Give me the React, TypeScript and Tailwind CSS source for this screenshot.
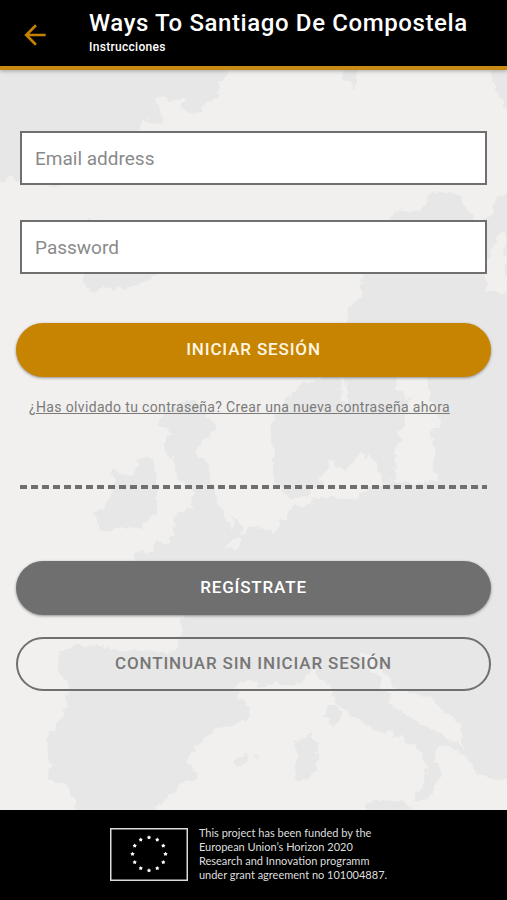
import React from "react";

const LAND = "#e7e7e7";
const SEA = "#f1f0ee";

function EuropeMap() {
  return (
    <svg
      className="absolute inset-0 -z-10 h-full w-full"
      viewBox="0 70 507 740"
      preserveAspectRatio="xMidYMid slice"
      aria-hidden="true"
    >
      <defs>
        <filter id="coast" x="0" y="0" width="100%" height="100%">
          <feTurbulence type="fractalNoise" baseFrequency="0.11" numOctaves="3" seed="4" result="n" />
          <feDisplacementMap in="SourceGraphic" in2="n" scale="11" xChannelSelector="R" yChannelSelector="G" />
        </filter>
      </defs>
      <rect x="0" y="70" width="507" height="740" fill={SEA} />
      <g filter="url(#coast)" fill={LAND}>
        <rect x="-20" y="50" width="547" height="780" fill={SEA} />
        {/* Greenland */}
        <path d="M-10 60H228V72L220 84 217 98 205 105 200 113 190 114 181 106 186 97 172 101 163 96 157 98 156 108 164 115 162 126 140 118 137 132 60 186 21 184 12 178 -10 184Z" />
        {/* Iceland */}
        <path d="M84 222 90 218 97 221 150 240 155 274 152 278 135 286 120 289 105 287 91 292 84 283 80 250Z" />
        {/* Svalbard and Novaya Zemlya */}
        <path d="M338 60H358V82L355 91 343 78Z" />
        <path d="M492 60V82L500 95 502 105 520 114V60Z" />
        {/* Scandinavia */}
        <path d="M388 220 400 209 408 213 420 210 428 198 434 193 440 189 450 194 462 200 467 212 480 221 492 215 497 197 520 190V520H430L435 492 397 480 382 484 375 460 360 452 347 470 330 462 324 480 310 494 290 500 272 478 275 452 270 440 270 425 278 415 285 402 300 385 320 378 340 360 346 318 350 308 360 296 360 286 368 272 380 250Z" />
        {/* Ireland */}
        <path d="M113 470 134 475 137 461 153 458 157 480 155 497 157 513 143 527 117 530 100 530 95 513 104 508 114 490Z" />
        {/* Great Britain */}
        <path d="M157 424 165 412 187 400 202 404 200 409 217 427 203 443 195 453 210 467 213 493 223 510 230 533 240 570 134 570 134 555 154 552 155 542 172 543 174 518 192 507 193 490 177 478 175 460 164 447 172 432Z" />
        {/* Continental Europe and Iberia */}
        <path d="M230 533 233 517 242 524 243 533 257 525 273 533 282 520 293 507 313 502 320 496 353 499 360 493 397 480 520 480V781L480 777 467 757 450 747 437 747 433 760 443 770 437 783 427 800 413 803 423 784 427 770 420 753 403 737 377 730 353 717 343 710 333 697 330 687 320 677 313 670 300 683 290 687 273 682 267 687 250 680 235 687 237 697 253 707 247 720 213 730 190 753 187 763 200 777 183 783 153 812 156 830H76L75 797 63 783 45 780 50 767 50 750 45 740 52 733 57 727 67 703 68 683 58 677 60 663 58 650 80 645 113 647 173 653 177 643 182 630 183 610 170 570 134 560 134 552 153 553 157 543 180 540Z" />
        {/* Adriatic, Baltic and northern inlets */}
        <g fill={SEA}>
          <path d="M360 653 377 657 383 673 400 690 427 697 460 723 463 750 450 740 420 723 397 710 383 690 380 677 370 673Z" />
          <path d="M397 375H427L430 400 441 420 430 440 436 455 433 470 439 481 397 484 395 460 400 430 410 400 396 388Z" />
          <path d="M342 375 348 390 348 405 343 400Z" />
          <path d="M486 292V262L492 250 500 232 507 238 504 260 507 292Z" />
          <path d="M318 480 330 462 345 470 353 496 335 498Z" />
          <path d="M224 547 240 536V547Z" />
        </g>
        {/* Mediterranean islands */}
        <path d="M327 703 338 703 340 717 333 728 327 723Z" />
        <path d="M293 740 310 733 320 747 313 777 302 783 295 777 297 757Z" />
        <path d="M230 760 246 753 248 762 240 767Z" />
        <path d="M254 753 262 758 258 761Z" />
        <path d="M366 802 408 800 415 830H366Z" />
      </g>
    </svg>
  );
}

function BackArrow() {
  return (
    <svg className="h-8 w-8" viewBox="0 0 24 24" fill="currentColor" aria-hidden="true">
      <path d="M20 11H7.83l5.59-5.59L12 4l-8 8 8 8 1.41-1.41L7.83 13H20z" />
    </svg>
  );
}

function star(cx: number, cy: number, r: number) {
  return Array.from({ length: 10 }, (_, i) => {
    const a = (Math.PI / 5) * i - Math.PI / 2;
    const d = i % 2 ? r * 0.6 : r;
    return `${(cx + d * Math.cos(a)).toFixed(2)},${(cy + d * Math.sin(a)).toFixed(2)}`;
  }).join(" ");
}

function EuFlag() {
  return (
    <svg className="h-[53px] w-[78px] shrink-0" viewBox="0 0 78 53" role="img" aria-label="European Union">
      <rect x="0.75" y="0.75" width="76.5" height="51.5" fill="none" stroke="#dcdcdc" strokeWidth="1.5" />
      {Array.from({ length: 12 }, (_, i) => {
        const a = (Math.PI / 6) * i;
        return <polygon key={i} fill="#fff" points={star(39 + 16.5 * Math.sin(a), 26 - 16.5 * Math.cos(a), 2.2)} />;
      })}
    </svg>
  );
}

const field =
  "block h-[54px] w-full border-2 border-[#6f6f6f] bg-white px-[13px] text-[19px] text-[#444] outline-none placeholder:text-[#8a8a8a]";
const pill = "h-[54px] w-full rounded-full text-[17px] font-medium tracking-wider uppercase";

export default function App() {
  return (
    <div className="flex min-h-screen flex-col bg-[#f1f0ee] font-['Roboto',sans-serif]">
      <header className="relative z-10 flex h-[70px] items-center border-b-4 border-[#c98a14] bg-black pl-[19px] shadow-[0_1px_4px_rgba(0,0,0,0.3)]">
        <button type="button" aria-label="Volver" className="mt-1 text-[#c48200]">
          <BackArrow />
        </button>
        <div className="ml-[38px] pb-[2px] text-white">
          <h1 className="text-[24px] leading-[30px] font-medium tracking-wide">Ways To Santiago De Compostela</h1>
          <p className="text-[12px] leading-[18px] font-medium tracking-wide">Instrucciones</p>
        </div>
      </header>

      <main className="relative isolate flex flex-1 flex-col overflow-hidden px-4 pt-[61px]">
        <EuropeMap />
        <form className="flex flex-col" onSubmit={(e) => e.preventDefault()}>
          <div className="flex flex-col gap-[35px] px-1">
            <input className={field} type="email" placeholder="Email address" aria-label="Email address" />
            <input className={field} type="password" placeholder="Password" aria-label="Password" />
          </div>
          <button type="submit" className={`${pill} mt-[49px] bg-[#c78400] text-[#fff6e4] shadow-[0_1px_3px_rgba(0,0,0,0.4)]`}>
            Iniciar sesión
          </button>
        </form>
        <a href="#recuperar" className="mt-5 self-start pl-[13px] text-[14px] leading-5 tracking-wide text-[#7a7a7a] underline">
          ¿Has olvidado tu contraseña? Crear una nueva contraseña ahora
        </a>
        <hr className="mx-1 mt-[68px] h-1 border-0 bg-[repeating-linear-gradient(90deg,#6f6f6f_0_7px,transparent_7px_11px)]" />
        <div className="mt-[72px] flex flex-col gap-[22px]">
          <button type="button" className={`${pill} bg-[#6f6f6f] text-white shadow-[0_1px_3px_rgba(0,0,0,0.4)]`}>
            Regístrate
          </button>
          <button type="button" className={`${pill} border-2 border-[#6f6f6f] text-[#777]`}>
            Continuar sin iniciar sesión
          </button>
        </div>
      </main>

      <footer className="flex h-[90px] items-center justify-center gap-[11px] bg-black pr-[10px] pb-[2px]">
        <EuFlag />
        <p className="font-['Lato',sans-serif] text-[11px] leading-[14px] text-[#dedede]">
          This project has been funded by the
          <br />
          European Union’s Horizon 2020
          <br />
          Research and Innovation programm
          <br />
          under grant agreement no 101004887.
        </p>
      </footer>
    </div>
  );
}
